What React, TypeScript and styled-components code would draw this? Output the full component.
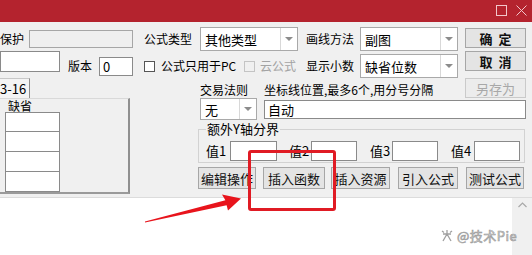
import React from 'react';
import styled, { createGlobalStyle } from 'styled-components';

const GlobalStyle = createGlobalStyle`
  html, body {
    margin: 0;
    padding: 0;
    background: #f0f0f0;
    overflow: hidden;
  }
  body {
    font-family: "Noto Sans CJK SC", "Microsoft YaHei", sans-serif;
    font-size: 12px;
    color: #000;
  }
`;

const Dialog = styled.div`
  position: relative;
  width: 532px;
  height: 255px;
  overflow: hidden;
  background: #f0f0f0;
  display: flex;
  flex-direction: column;
`;

const TitleBar = styled.div`
  height: 22px;
  flex: none;
  background: #b4232e;
  display: flex;
  justify-content: flex-end;
  align-items: flex-start;
  padding: 5px 5px 0 0;
  box-sizing: border-box;
  gap: 9px;
`;

const Row = styled.div<{ $mt?: number; $h?: number; $bottom?: boolean }>`
  display: flex;
  align-items: ${(p) => (p.$bottom ? 'flex-end' : 'center')};
  height: ${(p) => p.$h ?? 24}px;
  margin-top: ${(p) => p.$mt ?? 0}px;
  flex: none;
`;

const Label = styled.span<{ $w?: number; $ml?: number; $disabled?: boolean }>`
  flex: none;
  width: ${(p) => (p.$w ? `${p.$w}px` : 'auto')};
  margin-left: ${(p) => p.$ml ?? 0}px;
  white-space: nowrap;
  line-height: 16px;
  color: ${(p) => (p.$disabled ? '#a3a3a3' : '#000')};
`;

const TextBox = styled.div<{ $w: number; $h?: number; $ml?: number; $mt?: number; $disabled?: boolean }>`
  flex: none;
  box-sizing: border-box;
  width: ${(p) => p.$w}px;
  height: ${(p) => p.$h ?? 19}px;
  margin-left: ${(p) => p.$ml ?? 0}px;
  margin-top: ${(p) => p.$mt ?? 0}px;
  align-self: ${(p) => (p.$mt !== undefined ? 'flex-start' : 'center')};
  border: 1px solid ${(p) => (p.$disabled ? '#a6a6a6' : '#8a8a8a')};
  background: ${(p) => (p.$disabled ? '#efefef' : '#fff')};
  padding: 0 3px;
  display: flex;
  align-items: center;
  font-size: 13px;
  line-height: 15px;
`;

const SelectBox = styled.div<{ $w: number; $h?: number; $ml?: number }>`
  flex: none;
  box-sizing: border-box;
  width: ${(p) => p.$w}px;
  height: ${(p) => p.$h ?? 24}px;
  margin-left: ${(p) => p.$ml ?? 0}px;
  border: 1px solid #a9a9a9;
  background: #fff;
  display: flex;
  align-items: center;
`;

const SelectText = styled.span`
  flex: 1;
  padding-left: 4px;
  font-size: 13px;
  white-space: nowrap;
`;

const SelectArrow = styled.span`
  flex: none;
  width: 16px;
  height: 100%;
  border-left: 1px solid #d8d8d8;
  display: flex;
  align-items: center;
  justify-content: center;
  &::after {
    content: '';
    border-left: 4px solid transparent;
    border-right: 4px solid transparent;
    border-top: 4px solid #8c8c8c;
  }
`;

const Button = styled.div<{ $w: number; $h?: number; $ml?: number; $mt?: number; $disabled?: boolean; $bold?: boolean }>`
  flex: none;
  box-sizing: border-box;
  width: ${(p) => p.$w}px;
  height: ${(p) => p.$h ?? 20}px;
  margin-left: ${(p) => p.$ml ?? 0}px;
  margin-top: ${(p) => p.$mt ?? 0}px;
  align-self: ${(p) => (p.$mt !== undefined ? 'flex-start' : 'auto')};
  border: 1px solid ${(p) => (p.$disabled ? '#cacaca' : '#a6a6a6')};
  background: ${(p) => (p.$disabled ? '#ececec' : '#e4e4e4')};
  color: ${(p) => (p.$disabled ? '#a8a8a8' : '#111')};
  font-size: 13px;
  font-weight: ${(p) => (p.$bold ? 700 : 400)};
  display: flex;
  align-items: center;
  justify-content: center;
  white-space: pre;
`;

const CheckBox = styled.span<{ $ml?: number; $disabled?: boolean }>`
  flex: none;
  box-sizing: border-box;
  width: 11px;
  height: 11px;
  margin-left: ${(p) => p.$ml ?? 0}px;
  border: 1px solid ${(p) => (p.$disabled ? '#c4c4c4' : '#555')};
  background: ${(p) => (p.$disabled ? '#f0f0f0' : '#fff')};
`;

const Lower = styled.div`
  display: flex;
  height: 122px;
  margin-top: -3px;
  flex: none;
`;

const TabArea = styled.div`
  width: 130px;
  flex: none;
  display: flex;
  flex-direction: column;
`;

const TabHeader = styled.div`
  height: 23px;
  display: flex;
  align-items: flex-end;
`;

const Tab = styled.div`
  width: 30px;
  height: 21px;
  box-sizing: border-box;
  border-top: 1px solid #c8c8c8;
  border-right: 1px solid #8e8e8e;
  background: #f4f4f4;
  font-size: 13px;
  line-height: 19px;
  white-space: nowrap;
  margin-bottom: -1px;
`;

const TabPanel = styled.div`
  height: 96px;
  box-sizing: border-box;
  border-top: 1px solid #d9d9d9;
  border-right: 2px solid #8f8f8f;
  border-bottom: 2px solid #9a9a9a;
  display: flex;
  flex-direction: column;
`;

const ColumnTitle = styled.div`
  padding-left: 8px;
  height: 13px;
  line-height: 13px;
  font-size: 12px;
`;

const Cell = styled.div<{ $first?: boolean }>`
  width: 55px;
  height: 20px;
  margin-left: 5px;
  box-sizing: border-box;
  border: 1px solid #8a8a8a;
  border-top-width: ${(p) => (p.$first ? 1 : 0)}px;
  background: #fff;
`;

const RightArea = styled.div`
  width: 328px;
  margin-left: 68px;
  display: flex;
  flex-direction: column;
  padding-top: 3px;
`;

const GroupBox = styled.fieldset`
  margin: 2px 0 0 0;
  width: 327px;
  height: 41px;
  box-sizing: border-box;
  border: 1px solid #d2d2d2;
  padding: 0 0 0 7px;
  legend {
    padding: 0 1px;
    margin-left: 0;
    font-size: 13px;
    line-height: 14px;
  }
`;

const FieldRow = styled.div`
  display: flex;
  align-items: center;
  height: 20px;
  margin-top: 5px;
  font-size: 13px;
`;

const Editor = styled.div`
  flex: 1;
  display: flex;
  border-top: 1px solid #dcdcdc;
  background: #fff;
`;

const Scrollbar = styled.div`
  width: 20px;
  margin-left: auto;
  background: #f0f0f0;
  display: flex;
  justify-content: center;
  padding-top: 4px;
`;

const Highlight = styled.div`
  position: absolute;
  left: 248px;
  top: 150px;
  width: 88px;
  height: 61px;
  box-sizing: border-box;
  border: 3px solid #e01b24;
  border-radius: 3px;
`;

const ArrowLayer = styled.svg`
  position: absolute;
  left: 0;
  top: 0;
  pointer-events: none;
`;

const Watermark = styled.div`
  position: absolute;
  left: 440px;
  top: 226px;
  display: flex;
  align-items: center;
  gap: 3px;
  font-family: "Noto Sans CJK SC", sans-serif;
  font-size: 13px;
  color: #d4d4d4;
  -webkit-text-stroke: 0.6px #9a9a9a;
  letter-spacing: 0.5px;
`;

const App: React.FC = () => {
  return (
    <Dialog>
      <GlobalStyle />
      <TitleBar>
        <svg width="11" height="11" viewBox="0 0 11 11">
          <rect x="0.5" y="0.5" width="10" height="10" fill="none" stroke="#f2c6ca" strokeWidth="1" />
        </svg>
        <svg width="11" height="11" viewBox="0 0 11 11">
          <path d="M0.5 0.5 L10.5 10.5 M10.5 0.5 L0.5 10.5" stroke="#f2c6ca" strokeWidth="1" />
        </svg>
      </TitleBar>

      <Row $mt={5}>
        <Label $w={29}>保护</Label>
        <TextBox $w={104} $h={18} $disabled />
        <Label $w={56} $ml={11}>公式类型</Label>
        <SelectBox $w={98}>
          <SelectText>其他类型</SelectText>
          <SelectArrow />
        </SelectBox>
        <Label $w={54} $ml={8}>画线方法</Label>
        <SelectBox $w={98}>
          <SelectText>副图</SelectText>
          <SelectArrow />
        </SelectBox>
        <Button $w={61} $ml={7} $mt={1} $bold>{'确  定'}</Button>
      </Row>

      <Row $mt={3}>
        <TextBox $w={60} $h={21} $mt={-3} />
        <Label $w={31} $ml={8}>版本</Label>
        <TextBox $w={34}>0</TextBox>
        <CheckBox $ml={11} />
        <Label $w={77} $ml={6}>公式只用于PC</Label>
        <CheckBox $ml={6} $disabled />
        <Label $w={46} $ml={5} $disabled>云公式</Label>
        <Label $w={54}>显示小数</Label>
        <SelectBox $w={98}>
          <SelectText>缺省位数</SelectText>
          <SelectArrow />
        </SelectBox>
        <Button $w={61} $ml={7} $mt={-3} $bold>{'取  消'}</Button>
      </Row>

      <Lower>
        <TabArea>
          <TabHeader>
            <Tab>3-16</Tab>
          </TabHeader>
          <TabPanel>
            <ColumnTitle>缺省</ColumnTitle>
            <Cell $first />
            <Cell />
            <Cell />
            <Cell />
          </TabPanel>
        </TabArea>

        <RightArea>
          <Row $h={20} $bottom>
            <Label $w={64} $ml={2}>交易法则</Label>
            <Label $w={196}>坐标线位置,最多6个,用分号分隔</Label>
            <Button $w={61} $h={20} $ml={5} $disabled>另存为</Button>
          </Row>
          <Row $h={22}>
            <SelectBox $w={57} $h={22} $ml={2}>
              <SelectText>无</SelectText>
              <SelectArrow />
            </SelectBox>
            <TextBox $w={262} $ml={7}>自动</TextBox>
          </Row>
          <GroupBox>
            <legend>额外Y轴分界</legend>
            <FieldRow>
              <Label $w={24}>值1</Label>
              <TextBox $w={47} $h={20} />
              <Label $w={22} $ml={12}>值2</Label>
              <TextBox $w={46} $h={20} />
              <Label $w={22} $ml={13}>值3</Label>
              <TextBox $w={46} $h={20} />
              <Label $w={23} $ml={13}>值4</Label>
              <TextBox $w={46} $h={20} />
            </FieldRow>
          </GroupBox>
          <Row $h={22} $mt={4}>
            <Button $w={58} $h={22}>编辑操作</Button>
            <Button $w={62} $h={22} $ml={7}>插入函数</Button>
            <Button $w={59} $h={22} $ml={6}>插入资源</Button>
            <Button $w={60} $h={22} $ml={8}>引入公式</Button>
            <Button $w={58} $h={22} $ml={8}>测试公式</Button>
          </Row>
        </RightArea>
      </Lower>

      <Editor>
        <Scrollbar>
          <svg width="9" height="6" viewBox="0 0 9 6">
            <path d="M0.5 5 L4.5 1 L8.5 5" fill="none" stroke="#a8a8a8" strokeWidth="1.2" />
          </svg>
        </Scrollbar>
      </Editor>

      <Highlight />
      <ArrowLayer width="532" height="255" viewBox="0 0 532 255">
        <polygon
          points="145,222.6 226.6,205.2 228,210.5 241,198.5 222,194.5 225.4,200.2 145,221.6"
          fill="#e8141c"
        />
      </ArrowLayer>

      <Watermark>
        <svg width="14" height="13" viewBox="0 0 14 13">
          <path
            d="M7 1 L7 5 M3 5 L11 5 M7 5 L3 12 M7 5 L11 12 M2 2 L4 3.5 M12 2 L10 3.5"
            fill="none"
            stroke="#a0a0a0"
            strokeWidth="1.3"
          />
        </svg>
        <span>@技术Pie</span>
      </Watermark>
    </Dialog>
  );
};

export default App;
